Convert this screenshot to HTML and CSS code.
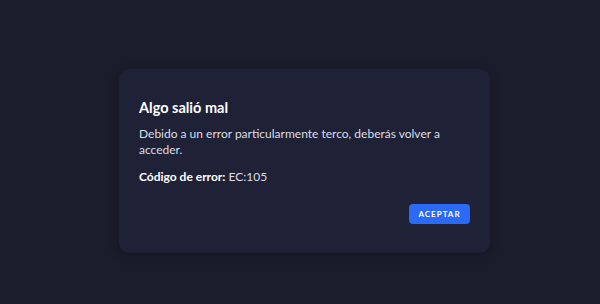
FILE: index.html
```html
<!DOCTYPE html>
<html lang="es">
<head>
<meta charset="UTF-8">
<meta name="viewport" content="width=device-width, initial-scale=1.0">
<title>Algo salió mal</title>
<link rel="stylesheet" href="styles.css">
</head>
<body>
<div class="dialog">
  <h2 class="dialog-title">Algo salió mal</h2>
  <p class="dialog-text">Debido a un error particularmente terco, deberás volver a acceder.</p>
  <p class="dialog-code"><strong>Código de error:</strong> EC:105</p>
  <div class="dialog-actions">
    <button class="accept-button">Aceptar</button>
  </div>
</div>
</body>
</html>
```

FILE: styles.css
```css
body {
  font-family: Lato, sans-serif;
  background-color: #1b1d2c;
  margin: 0;
  height: 100vh;
  box-sizing: border-box;
  padding: 69px 0 0 119px;
  display: flex;
  align-items: flex-start;
}
.dialog {
  background-color: #1f2236;
  width: 371px;
  height: 184px;
  box-sizing: border-box;
  padding: 29px 20px 29px 20px;
  border-radius: 10px;
  box-shadow: 0 2px 12px rgba(0, 0, 0, 0.25);
  display: flex;
  flex-direction: column;
}
.dialog-title {
  color: #ffffff;
  font-size: 14.5px;
  font-weight: bold;
  line-height: 20px;
  margin: 0 0 8px 0;
}
.dialog-text {
  color: #dcdde6;
  font-size: 12px;
  line-height: 16px;
  margin: 0 0 11px 0;
}
.dialog-code {
  color: #dcdde6;
  font-size: 12px;
  line-height: 16px;
  margin: 0;
}
.dialog-code strong {
  color: #ffffff;
}
.dialog-actions {
  margin-top: auto;
  display: flex;
  justify-content: flex-end;
}
.accept-button {
  background-color: #2b6af5;
  color: white;
  font-family: Lato, sans-serif;
  font-size: 8px;
  font-weight: bold;
  letter-spacing: 1px;
  text-transform: uppercase;
  width: 61px;
  height: 20px;
  padding: 0;
  border: none;
  border-radius: 4px;
  cursor: pointer;
}
```
